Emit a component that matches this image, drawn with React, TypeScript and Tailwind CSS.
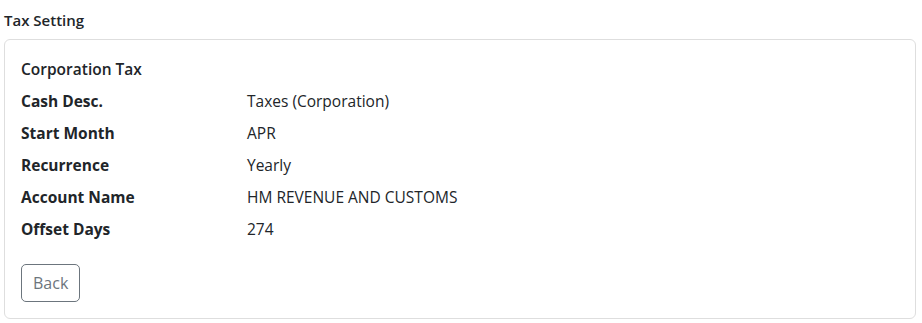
import React from 'react';

const rows = [
  { label: 'Cash Desc.', value: 'Taxes (Corporation)' },
  { label: 'Start Month', value: 'APR' },
  { label: 'Recurrence', value: 'Yearly' },
  { label: 'Account Name', value: 'HM REVENUE AND CUSTOMS' },
  { label: 'Offset Days', value: '274' },
];

export default function App() {
  return (
    <div className="bg-white text-[#212529] font-['Open_Sans',sans-serif] text-[15.5px] w-[922px] h-[323px] px-[4px] pt-[10px]">
      <h2 className="text-[15px] font-semibold leading-[20px] mb-[9px]">Tax Setting</h2>
      <div className="w-[912px] border border-[#dedede] rounded-[6px] px-[16px] pt-[17px] pb-[16px]">
        <div className="font-semibold leading-[24px] mb-[8px]">Corporation Tax</div>
        <div className="flex flex-col gap-[8px]">
          {rows.map((r) => (
            <div key={r.label} className="flex leading-[24px]">
              <div className="w-[226px] font-bold">{r.label}</div>
              <div>{r.value}</div>
            </div>
          ))}
        </div>
        <button className="mt-[23px] h-[38px] px-[11px] border border-[#6c757d] text-[#6c757d] rounded-[5px] text-[16px] leading-[24px]">
          Back
        </button>
      </div>
    </div>
  );
}
